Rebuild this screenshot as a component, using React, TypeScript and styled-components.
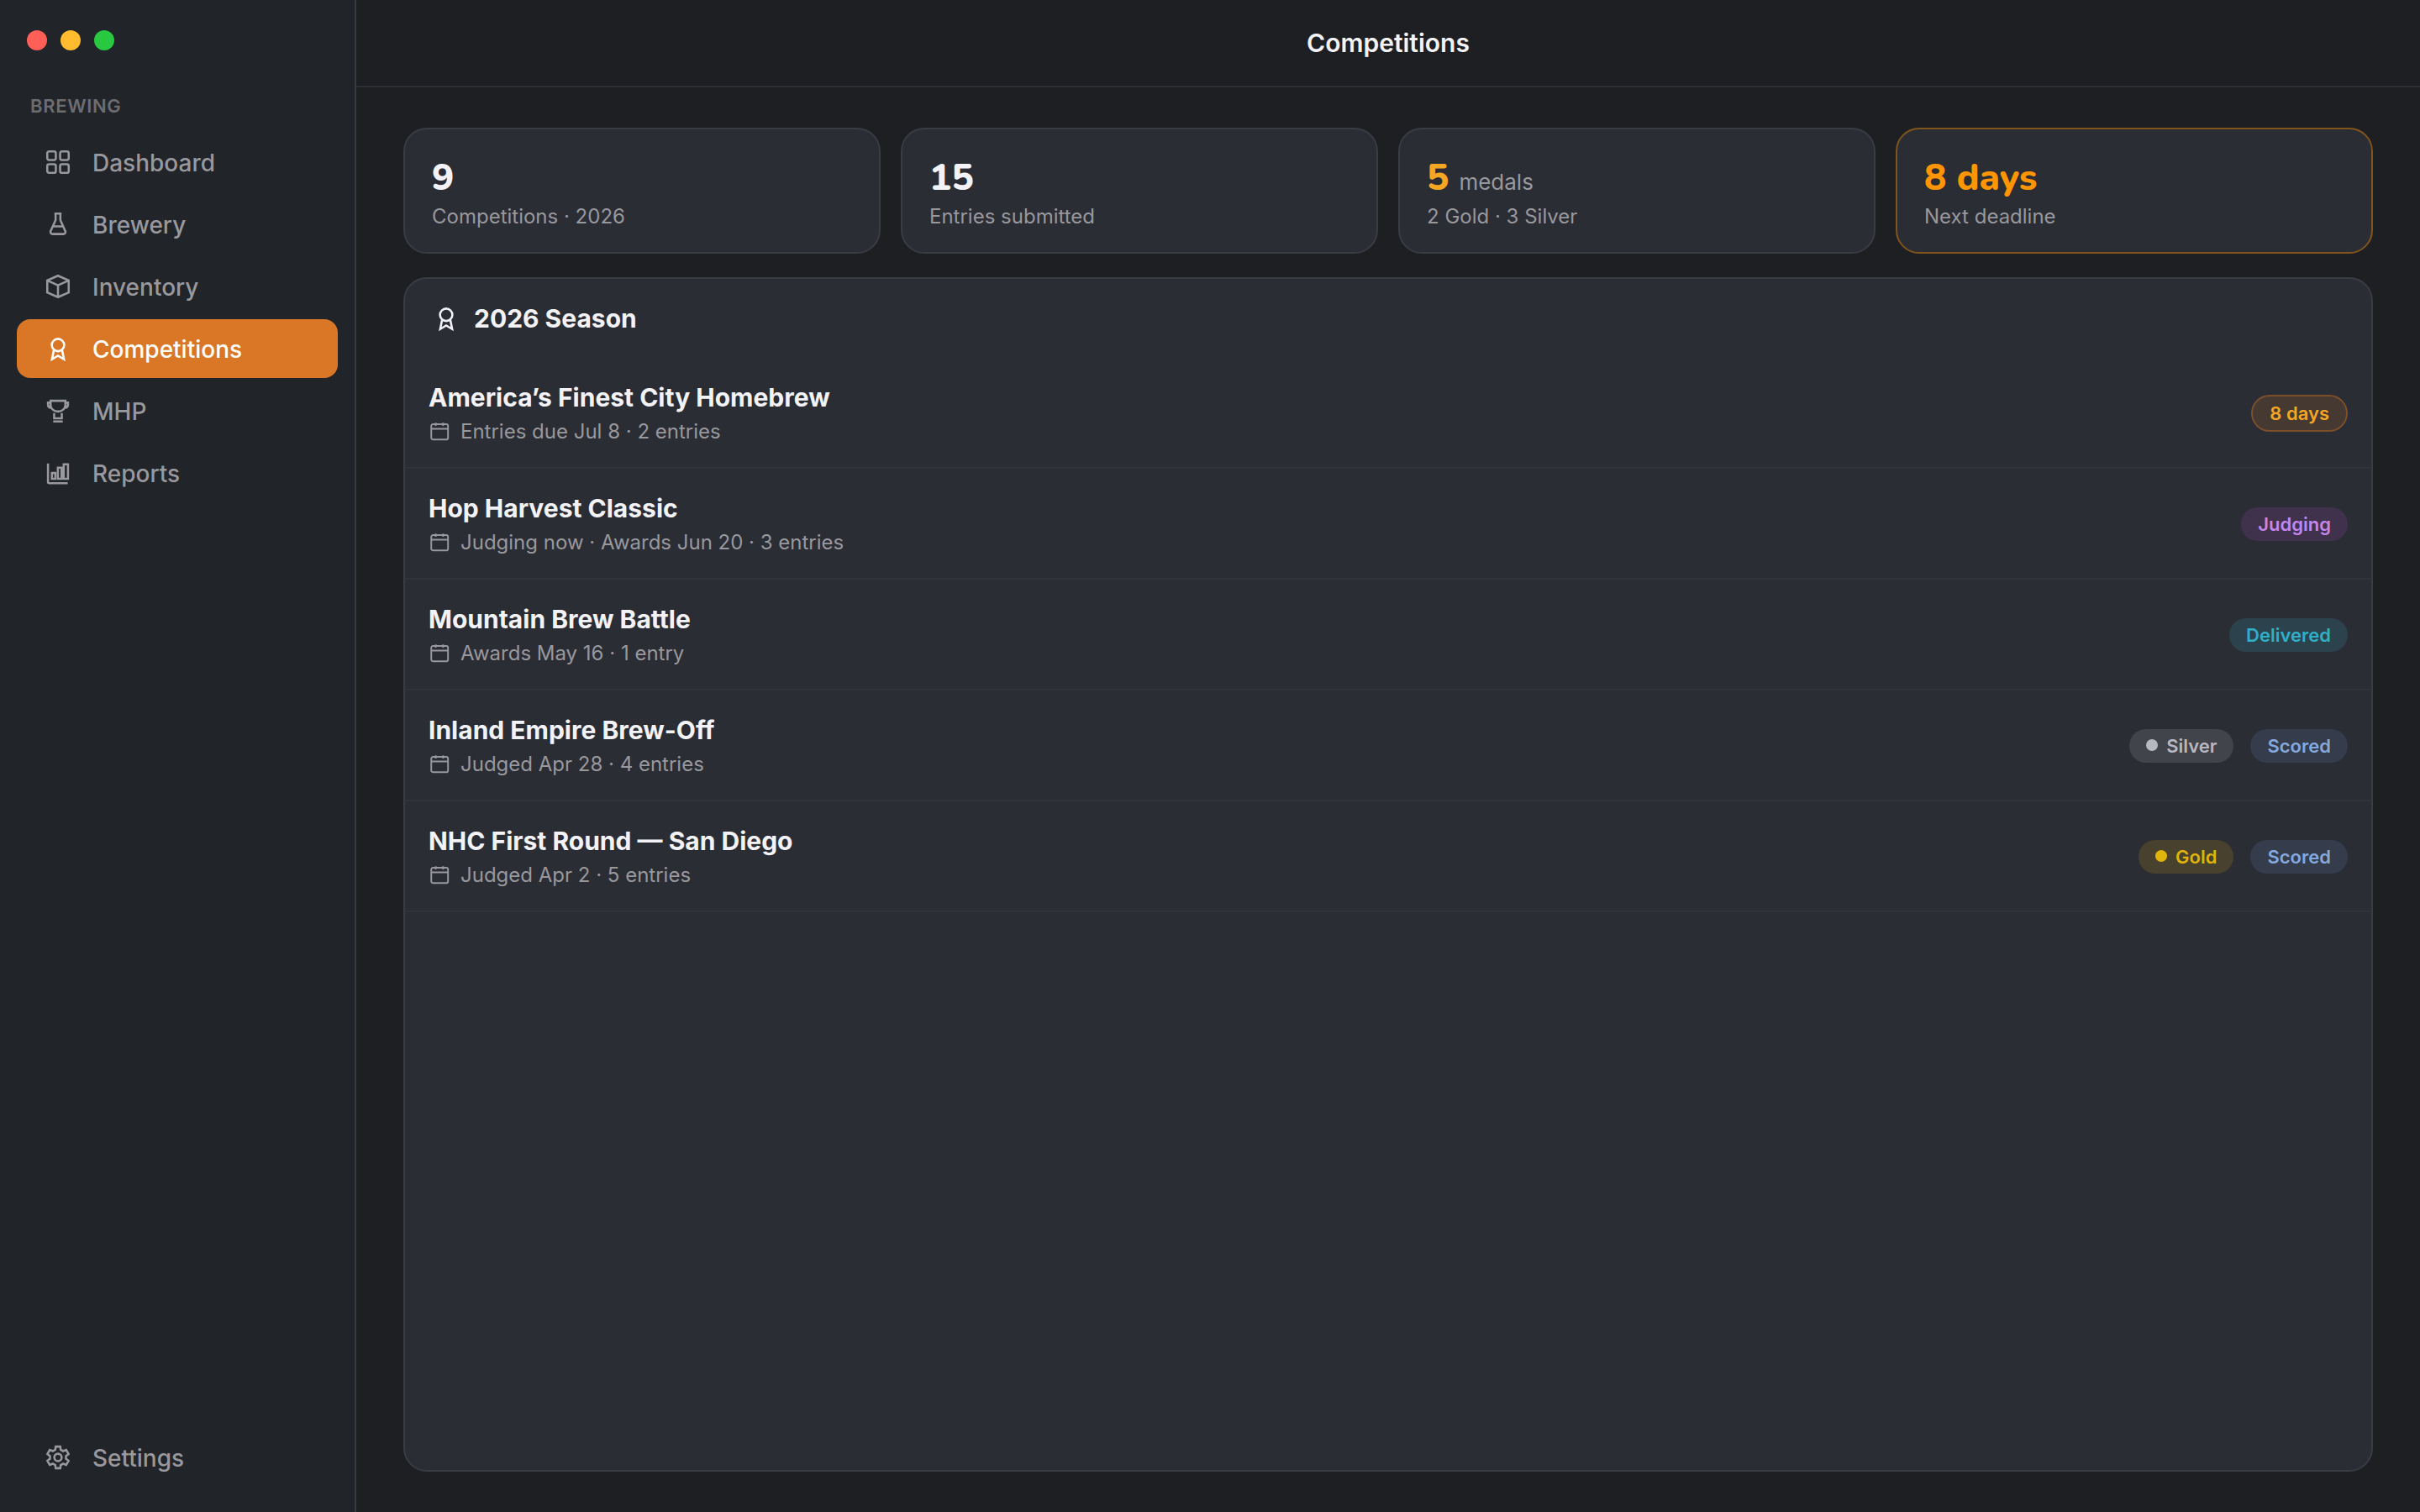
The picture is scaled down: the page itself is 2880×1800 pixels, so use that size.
import React from "react";
import styled, { createGlobalStyle, css } from "styled-components";

const GlobalStyle = createGlobalStyle`
  *, *::before, *::after { box-sizing: border-box; }
  html, body, #root { height: 100%; }
  body {
    margin: 0;
    background: #1e1f23;
    color: #f2f2f7;
    font-family: Inter, "Liberation Sans", sans-serif;
  }
  h1, h2, h3, p, ul { margin: 0; padding: 0; }
  ul { list-style: none; }
`;

const Shell = styled.div`
  display: grid;
  grid-template-columns: 424px minmax(0, 1fr);
  min-height: 100%;
`;

const Sidebar = styled.aside`
  display: flex;
  flex-direction: column;
  padding: 36px 20px 30px;
  background: #212429;
  border-right: 2px solid #3a3a44;
`;

const WindowControls = styled.div`
  display: flex;
  gap: 16px;
  padding-left: 12px;
`;

const WindowButton = styled.button<{ $color: string }>`
  width: 24px;
  height: 24px;
  padding: 0;
  border: 0;
  border-radius: 50%;
  background: ${(p) => p.$color};
`;

const GroupLabel = styled.h2`
  padding: 52px 16px 18px;
  font-size: 22px;
  line-height: 28px;
  font-weight: 600;
  letter-spacing: 0.03em;
  text-transform: uppercase;
  color: #6c6c71;
`;

const Nav = styled.nav`
  display: flex;
  flex: 1;
  flex-direction: column;
  gap: 4px;
`;

const NavLink = styled.a<{ $active?: boolean }>`
  display: flex;
  align-items: center;
  gap: 24px;
  height: 70px;
  padding: 0 32px;
  border-radius: 16px;
  font-size: 28px;
  line-height: 34px;
  font-weight: 500;
  text-decoration: none;
  color: #98989d;
  ${(p) =>
    p.$active &&
    css`
      background: #d97726;
      color: #ffffff;
    `}
`;

const NavText = styled.span`
  padding-top: 2px;
`;

const NavSpacer = styled.div`
  flex: 1;
`;

const Main = styled.main`
  display: flex;
  flex-direction: column;
`;

const TitleBar = styled.header`
  display: flex;
  align-items: center;
  justify-content: center;
  height: 104px;
  border-bottom: 2px solid #2c2e33;
`;

const PageTitle = styled.h1`
  font-size: 30px;
  line-height: 36px;
  font-weight: 600;
`;

const Content = styled.div`
  display: flex;
  flex: 1;
  flex-direction: column;
  gap: 28px;
  padding: 48px 56px;
`;

const StatGrid = styled.section`
  display: grid;
  grid-template-columns: repeat(4, minmax(0, 1fr));
  gap: 24px;
`;

const StatCard = styled.article<{ $highlight?: boolean }>`
  padding: 32px 32px 28px;
  border: 2px solid ${(p) => (p.$highlight ? "#80551c" : "#3a3b43")};
  border-radius: 28px;
  background: #2b2d35;
`;

const StatValue = styled.p<{ $color?: string }>`
  display: flex;
  align-items: baseline;
  gap: 12px;
  font-family: Nunito, "Open Sans", "Noto Sans", sans-serif;
  font-size: 44px;
  line-height: 52px;
  font-weight: 800;
  color: ${(p) => p.$color ?? "#f2f2f7"};
`;

const StatUnit = styled.span`
  font-family: Inter, "Liberation Sans", sans-serif;
  font-size: 26px;
  line-height: 32px;
  font-weight: 400;
  color: #98989d;
`;

const StatLabel = styled.p`
  padding-top: 6px;
  font-size: 24px;
  line-height: 28px;
  color: #98989d;
`;

const Panel = styled.section`
  flex: 1;
  border: 2px solid #3a3b43;
  border-radius: 28px;
  background: #2b2d35;
`;

const PanelHeader = styled.header`
  display: flex;
  align-items: center;
  gap: 16px;
  height: 94px;
  padding: 0 32px;
`;

const PanelTitle = styled.h2`
  font-size: 30px;
  line-height: 36px;
  font-weight: 700;
`;

const Row = styled.li`
  display: flex;
  align-items: center;
  justify-content: space-between;
  height: 132px;
  padding: 2px 28px 0;
  border-bottom: 2px solid #30323a;
`;

const RowText = styled.div`
  display: flex;
  flex-direction: column;
  gap: 6px;
`;

const RowTitle = styled.h3`
  font-size: 30px;
  line-height: 38px;
  font-weight: 700;
`;

const RowMeta = styled.p`
  display: flex;
  align-items: center;
  gap: 12px;
  font-size: 24px;
  line-height: 32px;
  color: #98989d;
`;

const Badges = styled.div`
  display: flex;
  align-items: center;
  gap: 20px;
`;

type Tone = "deadline" | "judging" | "delivered" | "scored" | "silver" | "gold";

const tones: Record<Tone, { text: string; fill: string; border?: string }> = {
  deadline: { text: "#f5a623", fill: "#453932", border: "#7c4f2b" },
  judging: { text: "#c586ec", fill: "#40324d" },
  delivered: { text: "#30b0c7", fill: "#2c424c" },
  scored: { text: "#86a9dd", fill: "#353c4c" },
  silver: { text: "#b8b8c2", fill: "#42444b" },
  gold: { text: "#e0b40c", fill: "#48412d" },
};

const Badge = styled.span<{ $tone: Tone }>`
  display: flex;
  align-items: center;
  gap: 10px;
  padding: 6px 20px;
  border: ${(p) => (tones[p.$tone].border ? `2px solid ${tones[p.$tone].border}` : "0")};
  border-radius: 22px;
  background: ${(p) => tones[p.$tone].fill};
  color: ${(p) => tones[p.$tone].text};
  font-size: 22px;
  line-height: 28px;
  font-weight: 600;
`;

const MedalDot = styled.i`
  width: 14px;
  height: 14px;
  margin-bottom: 2px;
  border-radius: 50%;
  background: currentColor;
`;

const Svg = styled.svg<{ $size: number }>`
  flex: none;
  width: ${(p) => p.$size}px;
  height: ${(p) => p.$size}px;
  fill: none;
  stroke: currentColor;
  stroke-width: 1.8;
`;

const glyphs = {
  grid: (
    <>
      <rect x="3" y="3" width="7.2" height="7.2" rx="1.5" />
      <rect x="13.8" y="3" width="7.2" height="7.2" rx="1.5" />
      <rect x="3" y="13.8" width="7.2" height="7.2" rx="1.5" />
      <rect x="13.8" y="13.8" width="7.2" height="7.2" rx="1.5" />
    </>
  ),
  flask: <path d="M9 3h6M10 3v5.4L5.9 17.6A1.8 1.8 0 0 0 7.6 20.2h8.8a1.8 1.8 0 0 0 1.7-2.6L14 8.4V3M7.6 13.8h8.8" />,
  box: <path d="M12 3l9 4v10l-9 4-9-4V7zM3 7l9 4 9-4M12 11v10" />,
  ribbon: (
    <>
      <circle cx="12" cy="9" r="5.2" />
      <path d="M8.5 13.5L7 21l5-3 5 3-1.5-7.5" />
    </>
  ),
  trophy: (
    <path d="M5.8 3.6h12.4v3.6a6.2 5.4 0 0 1-12.4 0zM5.8 5.2H3.6v1.6c0 1.6 1 2.6 2.6 2.8M18.2 5.2h2.2v1.6c0 1.6-1 2.6-2.6 2.8M8.8 14v4.4h6.4V14M8 21h8" />
  ),
  chart: (
    <path d="M3.6 4v15.6a1 1 0 0 0 1 1h15.6M6.9 12.1h2.9v4.8H6.9zM11.9 7.6H15v9.3h-3.1zM16.8 4.8h3.6v12.1h-3.6z" />
  ),
  gear: (
    <>
      <circle cx="12" cy="12" r="3.1" />
      <path d="M10.1 2.9h3.8l.4 2.7 2 1.1 2.6-1 2 3.5-2.2 1.7v2.2l2.2 1.7-2 3.5-2.6-1-2 1.1-.4 2.7h-3.8l-.4-2.7-2-1.1-2.6 1-2-3.5 2.2-1.7v-2.2L3.1 9.2l2-3.5 2.6 1 2-1.1z" />
    </>
  ),
  calendar: (
    <>
      <rect x="3" y="3.7" width="18.4" height="16.9" rx="2" />
      <path d="M3 8.8h18.4M7.9 2v3.5M16 2v3.5" />
    </>
  ),
};

type Glyph = keyof typeof glyphs;

const Icon = ({ name, size = 34 }: { name: Glyph; size?: number }) => (
  <Svg viewBox="0 0 24 24" $size={size} aria-hidden="true">
    {glyphs[name]}
  </Svg>
);

const navItems: { label: string; icon: Glyph }[] = [
  { label: "Dashboard", icon: "grid" },
  { label: "Brewery", icon: "flask" },
  { label: "Inventory", icon: "box" },
  { label: "Competitions", icon: "ribbon" },
  { label: "MHP", icon: "trophy" },
  { label: "Reports", icon: "chart" },
];

const stats = [
  { value: "9", label: "Competitions · 2026" },
  { value: "15", label: "Entries submitted" },
  { value: "5", unit: "medals", label: "2 Gold · 3 Silver", color: "#f5a623" },
  { value: "8 days", label: "Next deadline", color: "#ff9500", highlight: true },
];

const competitions: {
  name: string;
  meta: string;
  badges: { label: string; tone: Tone; medal?: boolean }[];
}[] = [
  {
    name: "America’s Finest City Homebrew",
    meta: "Entries due Jul 8 · 2 entries",
    badges: [{ label: "8 days", tone: "deadline" }],
  },
  {
    name: "Hop Harvest Classic",
    meta: "Judging now · Awards Jun 20 · 3 entries",
    badges: [{ label: "Judging", tone: "judging" }],
  },
  {
    name: "Mountain Brew Battle",
    meta: "Awards May 16 · 1 entry",
    badges: [{ label: "Delivered", tone: "delivered" }],
  },
  {
    name: "Inland Empire Brew-Off",
    meta: "Judged Apr 28 · 4 entries",
    badges: [
      { label: "Silver", tone: "silver", medal: true },
      { label: "Scored", tone: "scored" },
    ],
  },
  {
    name: "NHC First Round — San Diego",
    meta: "Judged Apr 2 · 5 entries",
    badges: [
      { label: "Gold", tone: "gold", medal: true },
      { label: "Scored", tone: "scored" },
    ],
  },
];

export default function App() {
  return (
    <>
      <GlobalStyle />
      <Shell>
        <Sidebar>
          <WindowControls>
            <WindowButton $color="#ff5f57" aria-label="Close" />
            <WindowButton $color="#febc2e" aria-label="Minimize" />
            <WindowButton $color="#28c840" aria-label="Zoom" />
          </WindowControls>
          <GroupLabel>Brewing</GroupLabel>
          <Nav>
            {navItems.map((item) => (
              <NavLink key={item.label} href="#" $active={item.label === "Competitions"}>
                <Icon name={item.icon} />
                <NavText>{item.label}</NavText>
              </NavLink>
            ))}
            <NavSpacer />
            <NavLink href="#">
              <Icon name="gear" />
              <NavText>Settings</NavText>
            </NavLink>
          </Nav>
        </Sidebar>
        <Main>
          <TitleBar>
            <PageTitle>Competitions</PageTitle>
          </TitleBar>
          <Content>
            <StatGrid>
              {stats.map((stat) => (
                <StatCard key={stat.label} $highlight={stat.highlight}>
                  <StatValue $color={stat.color}>
                    {stat.value}
                    {stat.unit && <StatUnit>{stat.unit}</StatUnit>}
                  </StatValue>
                  <StatLabel>{stat.label}</StatLabel>
                </StatCard>
              ))}
            </StatGrid>
            <Panel>
              <PanelHeader>
                <Icon name="ribbon" />
                <PanelTitle>2026 Season</PanelTitle>
              </PanelHeader>
              <ul>
                {competitions.map((item) => (
                  <Row key={item.name}>
                    <RowText>
                      <RowTitle>{item.name}</RowTitle>
                      <RowMeta>
                        <Icon name="calendar" size={26} />
                        {item.meta}
                      </RowMeta>
                    </RowText>
                    <Badges>
                      {item.badges.map((badge) => (
                        <Badge key={badge.label} $tone={badge.tone}>
                          {badge.medal && <MedalDot />}
                          {badge.label}
                        </Badge>
                      ))}
                    </Badges>
                  </Row>
                ))}
              </ul>
            </Panel>
          </Content>
        </Main>
      </Shell>
    </>
  );
}
